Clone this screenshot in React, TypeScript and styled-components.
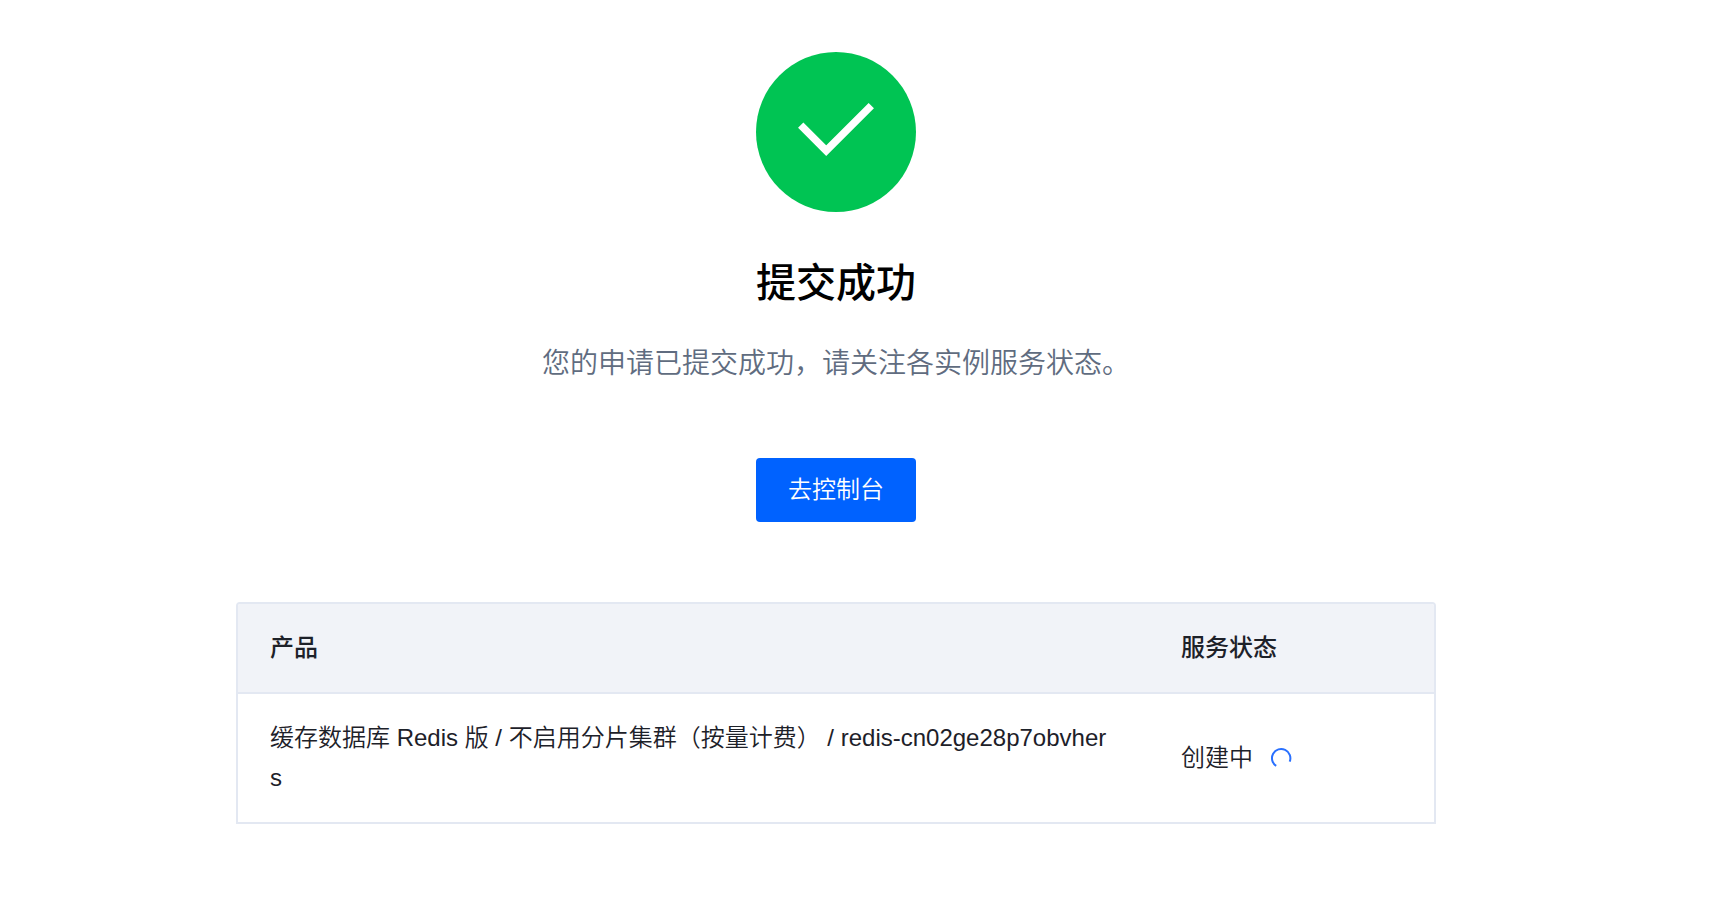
import React from "react";
import styled, { createGlobalStyle } from "styled-components";

const GlobalStyle = createGlobalStyle`
  * {
    box-sizing: border-box;
  }

  body {
    margin: 0;
    background: #ffffff;
    color: #1d2129;
    font-family: "Liberation Sans", "Noto Sans CJK SC", sans-serif;
    font-size: 24px;
    font-weight: 350;
    line-height: 40px;
  }
`;

const Page = styled.main`
  display: flex;
  flex-direction: column;
  align-items: center;
  padding: 52px 58px 76px 0;
`;

const SuccessIcon = styled.svg`
  display: block;
  width: 160px;
  height: 160px;
`;

const Title = styled.h1`
  margin: 40px 0 0;
  color: #000000;
  font-size: 40px;
  font-weight: 500;
  line-height: 62px;
`;

const Description = styled.p`
  margin: 28px 0 0;
  color: #606c80;
  font-size: 28px;
  line-height: 44px;
`;

const PrimaryButton = styled.button`
  height: 64px;
  margin: 72px 0 80px;
  padding: 0 32px;
  border: 0;
  border-radius: 4px;
  background: #0062ff;
  color: #ffffff;
  font: inherit;
  cursor: pointer;
`;

const TableFrame = styled.div`
  width: 100%;
  max-width: 1200px;
  border: 2px solid #e3e8f2;
  border-radius: 4px 4px 0 0;
  overflow: hidden;
`;

const Table = styled.table`
  width: 100%;
  border-collapse: separate;
  border-spacing: 0;
  table-layout: fixed;
`;

const HeadCell = styled.th<{ $width?: string }>`
  width: ${({ $width }) => $width ?? "auto"};
  padding: 24px 32px;
  border-bottom: 2px solid #e3e8f2;
  background: #f1f3f8;
  font-weight: 500;
  text-align: left;
`;

const Cell = styled.td`
  padding: 24px 32px;
  vertical-align: middle;
  word-break: break-all;
`;

const Status = styled.span`
  display: flex;
  align-items: center;
  gap: 17px;
`;

const Spinner = styled.svg`
  width: 22px;
  height: 22px;
`;

const orders = [
  {
    id: "redis-cn02ge28p7obvhers",
    product: "缓存数据库 Redis 版 / 不启用分片集群（按量计费）",
    status: "创建中",
  },
];

export default function App() {
  return (
    <>
      <GlobalStyle />
      <Page>
        <SuccessIcon viewBox="0 0 160 160" aria-hidden="true">
          <circle cx="80" cy="80" r="80" fill="#00c453" />
          <path
            d="M44.700 73.200 70.200 98.700 115.300 53.600"
            fill="none"
            stroke="#ffffff"
            strokeWidth="7.500"
          />
        </SuccessIcon>
        <Title>提交成功</Title>
        <Description>您的申请已提交成功，请关注各实例服务状态。</Description>
        <PrimaryButton type="button">去控制台</PrimaryButton>
        <TableFrame>
          <Table>
            <thead>
              <tr>
                <HeadCell scope="col">产品</HeadCell>
                <HeadCell scope="col" $width="285px">
                  服务状态
                </HeadCell>
              </tr>
            </thead>
            <tbody>
              {orders.map((order) => (
                <tr key={order.id}>
                  <Cell>{`${order.product} / ${order.id}`}</Cell>
                  <Cell>
                    <Status>
                      {order.status}
                      <Spinner viewBox="0 0 22 22" aria-hidden="true">
                        <path
                          d="M6.200 18.900A9.200 9.200 0 1 1 19.700 14.600"
                          fill="none"
                          stroke="#2970ff"
                          strokeWidth="2"
                        />
                      </Spinner>
                    </Status>
                  </Cell>
                </tr>
              ))}
            </tbody>
          </Table>
        </TableFrame>
      </Page>
    </>
  );
}
